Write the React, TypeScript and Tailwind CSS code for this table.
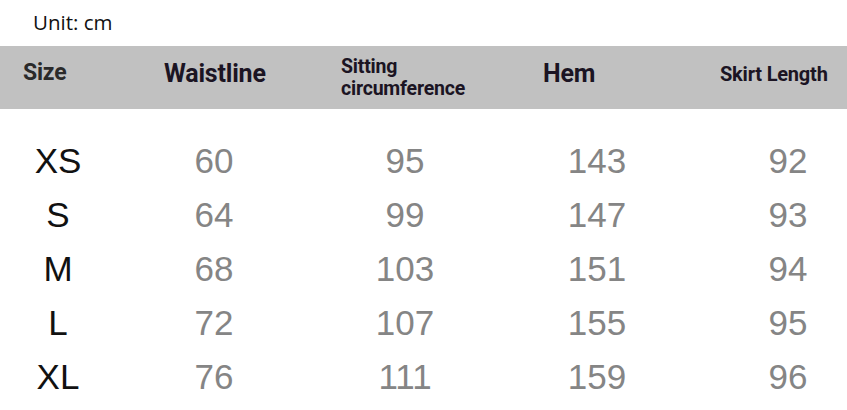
const rows = [
  { size: 'XS', waist: 60, sit: 95, hem: 143, len: 92 },
  { size: 'S', waist: 64, sit: 99, hem: 147, len: 93 },
  { size: 'M', waist: 68, sit: 103, hem: 151, len: 94 },
  { size: 'L', waist: 72, sit: 107, hem: 155, len: 95 },
  { size: 'XL', waist: 76, sit: 111, hem: 159, len: 96 },
];

export default function App() {
  return (
    <div className="w-[847px] h-[410px] bg-white overflow-hidden">
      {/* Unit label */}
      <div className="h-[46px] pl-[33px] pt-[8px] text-[20.5px] leading-[28px] text-[#111] font-['Open_Sans',sans-serif]">
        Unit: cm
      </div>

      {/* Header band */}
      <div className="h-[63px] bg-[#c1c1c1] flex items-center pb-[8px] font-['Roboto',sans-serif] font-bold">
        <div className="w-[164px] pl-[23px] text-[23px] text-[#2a2a2a] tracking-[-0.2px]">Size</div>
        <div className="w-[177px] text-[25px] text-[#1b1423] tracking-[-0.2px]">Waistline</div>
        <div className="w-[202px] text-[19.5px] leading-[22px] text-[#1b1423] pt-[8px] tracking-[-0.2px]">
          Sitting
          <br />
          circumference
        </div>
        <div className="w-[177px] text-[25px] text-[#1b1423] tracking-[-0.2px]">Hem</div>
        <div className="text-[20px] text-[#1b1423] tracking-[-0.2px]">Skirt Length</div>
      </div>

      {/* Data rows */}
      <div className="pt-[25px] flex flex-col font-['Liberation_Sans',Arial,sans-serif] text-[35px]">
        {rows.map((r) => (
          <div key={r.size} className="h-[54px] flex items-center">
            <div className="w-[116px] text-center text-[#111]">{r.size}</div>
            <div className="w-[196px] text-center text-[#858585]">{r.waist}</div>
            <div className="w-[186px] text-center text-[#858585]">{r.sit}</div>
            <div className="w-[198px] text-center text-[#858585]">{r.hem}</div>
            <div className="ml-[44px] w-[96px] text-center text-[#858585]">{r.len}</div>
          </div>
        ))}
      </div>
    </div>
  );
}
